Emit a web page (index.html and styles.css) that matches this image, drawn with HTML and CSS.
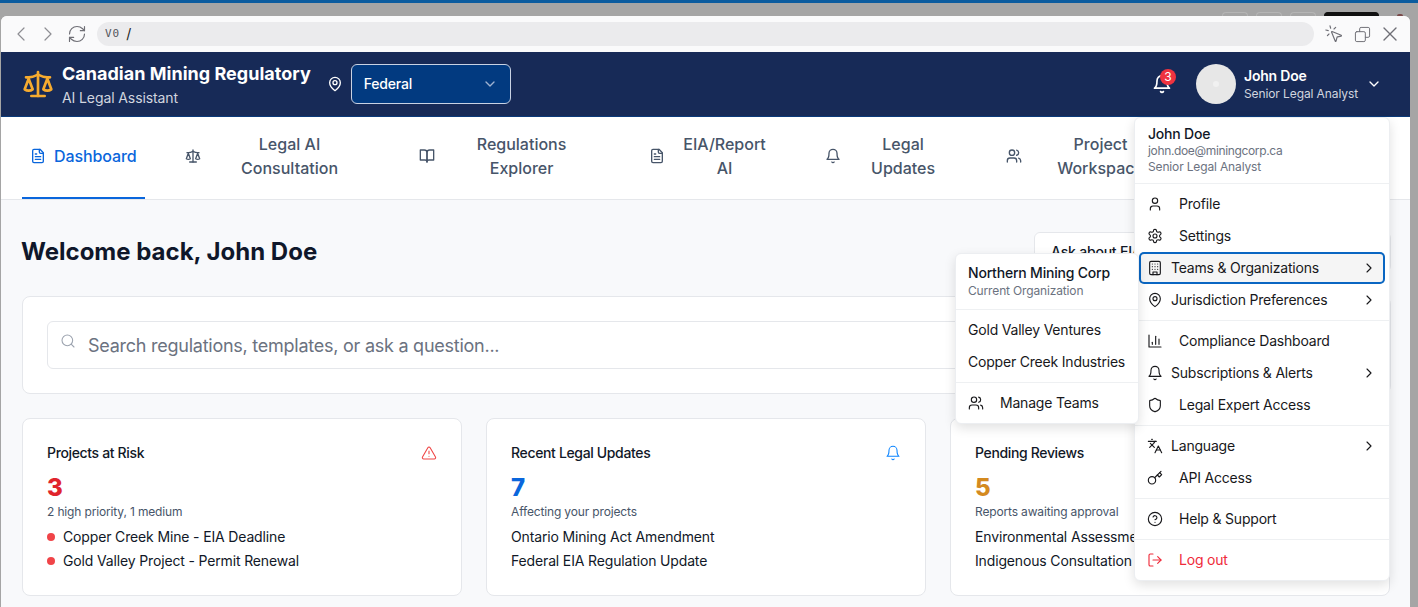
FILE: index.html
```html
<!DOCTYPE html>
<html lang="en">
<head>
    <meta charset="UTF-8">
    <meta name="viewport" content="width=device-width, initial-scale=1.0">
    <title>Canadian Mining Regulatory</title>
    <link rel="stylesheet" href="styles.css">
</head>
<body>
    <svg class="sprite" xmlns="http://www.w3.org/2000/svg">
        <symbol id="i-scale" viewBox="0 0 24 24"><path d="m16 16 3-8 3 8c-.87.65-1.92 1-3 1s-2.13-.35-3-1Z"/><path d="m2 16 3-8 3 8c-.87.65-1.92 1-3 1s-2.13-.35-3-1Z"/><path d="M7 21h10"/><path d="M12 3v18"/><path d="M3 7h2c2 0 5-1 7-2 2 1 5 2 7 2h2"/></symbol>
        <symbol id="i-pin" viewBox="0 0 24 24"><path d="M20 10c0 6-8 12-8 12s-8-6-8-12a8 8 0 0 1 16 0Z"/><circle cx="12" cy="10" r="3"/></symbol>
        <symbol id="i-down" viewBox="0 0 24 24"><path d="m6 9 6 6 6-6"/></symbol>
        <symbol id="i-right" viewBox="0 0 24 24"><path d="m9 18 6-6-6-6"/></symbol>
        <symbol id="i-left" viewBox="0 0 24 24"><path d="m15 18-6-6 6-6"/></symbol>
        <symbol id="i-bell" viewBox="0 0 24 24"><path d="M6 8a6 6 0 0 1 12 0c0 7 3 9 3 9H3s3-2 3-9"/><path d="M10.3 21a1.94 1.94 0 0 0 3.4 0"/></symbol>
        <symbol id="i-file" viewBox="0 0 24 24"><path d="M15 2H6a2 2 0 0 0-2 2v16a2 2 0 0 0 2 2h12a2 2 0 0 0 2-2V7Z"/><path d="M14 2v4a2 2 0 0 0 2 2h4"/><path d="M10 9H8"/><path d="M16 13H8"/><path d="M16 17H8"/></symbol>
        <symbol id="i-book" viewBox="0 0 24 24"><path d="M2 3h6a4 4 0 0 1 4 4v14a3 3 0 0 0-3-3H2z"/><path d="M22 3h-6a4 4 0 0 0-4 4v14a3 3 0 0 1 3-3h7z"/></symbol>
        <symbol id="i-users" viewBox="0 0 24 24"><path d="M16 21v-2a4 4 0 0 0-4-4H6a4 4 0 0 0-4 4v2"/><circle cx="9" cy="7" r="4"/><path d="M22 21v-2a4 4 0 0 0-3-3.87"/><path d="M16 3.13a4 4 0 0 1 0 7.75"/></symbol>
        <symbol id="i-user" viewBox="0 0 24 24"><path d="M19 21v-2a4 4 0 0 0-4-4H9a4 4 0 0 0-4 4v2"/><circle cx="12" cy="7" r="4"/></symbol>
        <symbol id="i-gear" viewBox="0 0 24 24"><path d="M12.22 2h-.44a2 2 0 0 0-2 2v.18a2 2 0 0 1-1 1.73l-.43.25a2 2 0 0 1-2 0l-.15-.08a2 2 0 0 0-2.73.73l-.22.38a2 2 0 0 0 .73 2.73l.15.1a2 2 0 0 1 1 1.72v.51a2 2 0 0 1-1 1.74l-.15.09a2 2 0 0 0-.73 2.73l.22.38a2 2 0 0 0 2.73.73l.15-.08a2 2 0 0 1 2 0l.43.25a2 2 0 0 1 1 1.73V20a2 2 0 0 0 2 2h.44a2 2 0 0 0 2-2v-.18a2 2 0 0 1 1-1.73l.43-.25a2 2 0 0 1 2 0l.15.08a2 2 0 0 0 2.73-.73l.22-.39a2 2 0 0 0-.73-2.73l-.15-.08a2 2 0 0 1-1-1.74v-.5a2 2 0 0 1 1-1.74l.15-.09a2 2 0 0 0 .73-2.73l-.22-.38a2 2 0 0 0-2.73-.73l-.15.08a2 2 0 0 1-2 0l-.43-.25a2 2 0 0 1-1-1.73V4a2 2 0 0 0-2-2z"/><circle cx="12" cy="12" r="3"/></symbol>
        <symbol id="i-building" viewBox="0 0 24 24"><rect x="4" y="2" width="16" height="20" rx="2"/><path d="M9 22v-4h6v4"/><path d="M8 6h.01"/><path d="M16 6h.01"/><path d="M12 6h.01"/><path d="M12 10h.01"/><path d="M12 14h.01"/><path d="M16 10h.01"/><path d="M16 14h.01"/><path d="M8 10h.01"/><path d="M8 14h.01"/></symbol>
        <symbol id="i-chart" viewBox="0 0 24 24"><path d="M3 3v18h18"/><path d="M18 17V9"/><path d="M13 17V5"/><path d="M8 17v-3"/></symbol>
        <symbol id="i-shield" viewBox="0 0 24 24"><path d="M20 13c0 5-3.5 7.5-7.66 8.95a1 1 0 0 1-.67-.01C7.5 20.5 4 18 4 13V6a1 1 0 0 1 1-1c2 0 4.5-1.2 6.24-2.72a1.17 1.17 0 0 1 1.52 0C14.51 3.81 17 5 19 5a1 1 0 0 1 1 1z"/></symbol>
        <symbol id="i-lang" viewBox="0 0 24 24"><path d="m5 8 6 6"/><path d="m4 14 6-6 2-3"/><path d="M2 5h12"/><path d="M7 2h1"/><path d="m22 22-5-10-5 10"/><path d="M14 18h6"/></symbol>
        <symbol id="i-key" viewBox="0 0 24 24"><circle cx="7.5" cy="15.5" r="5.5"/><path d="m21 2-9.6 9.6"/><path d="m15.5 7.5 3 3L22 7l-3-3"/></symbol>
        <symbol id="i-help" viewBox="0 0 24 24"><circle cx="12" cy="12" r="10"/><path d="M9.09 9a3 3 0 0 1 5.83 1c0 2-3 3-3 3"/><path d="M12 17h.01"/></symbol>
        <symbol id="i-logout" viewBox="0 0 24 24"><path d="M9 21H5a2 2 0 0 1-2-2V5a2 2 0 0 1 2-2h4"/><path d="m16 17 5-5-5-5"/><path d="M21 12H9"/></symbol>
        <symbol id="i-alert" viewBox="0 0 24 24"><path d="m21.73 18-8-14a2 2 0 0 0-3.48 0l-8 14A2 2 0 0 0 4 21h16a2 2 0 0 0 1.73-3"/><path d="M12 9v4"/><path d="M12 17h.01"/></symbol>
        <symbol id="i-search" viewBox="0 0 24 24"><circle cx="11" cy="11" r="8"/><path d="m21 21-4.3-4.3"/></symbol>
        <symbol id="i-reload" viewBox="0 0 24 24"><path d="M3 12a9 9 0 0 1 9-9 9.75 9.75 0 0 1 6.74 2.74L21 8"/><path d="M21 3v5h-5"/><path d="M21 12a9 9 0 0 1-9 9 9.75 9.75 0 0 1-6.74-2.74L3 16"/><path d="M8 16H3v5"/></symbol>
        <symbol id="i-click" viewBox="0 0 24 24"><path d="M14 4.1 12 6"/><path d="m5.1 8-2.9-.8"/><path d="m6 12-1.9 2"/><path d="M7.2 2.2 8 5.1"/><path d="M9.037 9.69a.498.498 0 0 1 .653-.653l11 4.5a.5.5 0 0 1-.074.949l-4.349 1.041a1 1 0 0 0-.74.739l-1.04 4.35a.5.5 0 0 1-.95.074z"/></symbol>
        <symbol id="i-windows" viewBox="0 0 24 24"><rect x="2" y="8" width="14" height="14" rx="2"/><path d="M8 8V4a2 2 0 0 1 2-2h10a2 2 0 0 1 2 2v10a2 2 0 0 1-2 2h-4"/></symbol>
        <symbol id="i-x" viewBox="0 0 24 24"><path d="M18 6 6 18"/><path d="m6 6 12 12"/></symbol>
    </svg>

    <div class="os-strip"></div>
    <div class="os-tabs">
        <span class="os-tab"></span>
        <span class="os-tab"></span>
        <span class="os-tab"></span>
        <span class="os-tab os-tab-dark"></span>
        <span class="os-dot"></span>
    </div>

    <div class="window">
        <div class="toolbar">
            <svg class="icon tool-chevron"><use href="#i-left"/></svg>
            <svg class="icon tool-chevron tool-forward"><use href="#i-right"/></svg>
            <svg class="icon tool-reload"><use href="#i-reload"/></svg>
            <div class="url-pill"><span class="url-logo">V0</span> <span class="url-path">/</span></div>
            <svg class="icon tool-click"><use href="#i-click"/></svg>
            <svg class="icon tool-windows"><use href="#i-windows"/></svg>
            <svg class="icon tool-close"><use href="#i-x"/></svg>
        </div>

        <header class="app-header">
            <svg class="icon brand-icon"><use href="#i-scale"/></svg>
            <div class="brand-text">
                <div class="brand-title">Canadian Mining Regulatory</div>
                <div class="brand-sub">AI Legal Assistant</div>
            </div>
            <svg class="icon pin-icon"><use href="#i-pin"/></svg>
            <div class="jurisdiction">
                <span>Federal</span>
                <svg class="icon"><use href="#i-down"/></svg>
            </div>
            <div class="notify">
                <svg class="icon icon-20"><use href="#i-bell"/></svg>
                <span class="notify-badge">3</span>
            </div>
            <div class="avatar"><span class="avatar-dot"></span></div>
            <div class="user-text">
                <div class="user-name">John Doe</div>
                <div class="user-role">Senior Legal Analyst</div>
            </div>
            <svg class="icon user-chevron"><use href="#i-down"/></svg>
        </header>

        <nav class="tabs">
            <a class="tab tab-active"><svg class="icon"><use href="#i-file"/></svg><span>Dashboard</span></a>
            <a class="tab"><svg class="icon"><use href="#i-scale"/></svg><span class="tab-label w-162">Legal AI<br>Consultation</span></a>
            <a class="tab"><svg class="icon"><use href="#i-book"/></svg><span class="tab-label w-158">Regulations<br>Explorer</span></a>
            <a class="tab"><svg class="icon"><use href="#i-file"/></svg><span class="tab-label w-104">EIA/Report<br>AI</span></a>
            <a class="tab"><svg class="icon"><use href="#i-bell"/></svg><span class="tab-label w-109">Legal<br>Updates</span></a>
            <a class="tab"><svg class="icon"><use href="#i-users"/></svg><span class="tab-label w-142">Project<br>Workspace</span></a>
        </nav>

        <main class="content">
            <div class="welcome-row">
                <h1>Welcome back, John Doe</h1>
                <div class="ask-btn">Ask about EIA Reports and permits today</div>
            </div>

            <section class="search-card">
                <div class="search-box">
                    <svg class="icon search-icon"><use href="#i-search"/></svg>
                    <span class="search-text">Search regulations, templates, or ask a question...</span>
                </div>
            </section>

            <section class="cards">
                <div class="card">
                    <div class="card-head">
                        <span>Projects at Risk</span>
                        <svg class="icon c-red"><use href="#i-alert"/></svg>
                    </div>
                    <div class="card-num num-red">3</div>
                    <div class="card-sub">2 high priority, 1 medium</div>
                    <ul class="card-list">
                        <li class="has-dot">Copper Creek Mine - EIA Deadline</li>
                        <li class="has-dot">Gold Valley Project - Permit Renewal</li>
                    </ul>
                </div>
                <div class="card">
                    <div class="card-head">
                        <span>Recent Legal Updates</span>
                        <svg class="icon c-blue"><use href="#i-bell"/></svg>
                    </div>
                    <div class="card-num num-blue">7</div>
                    <div class="card-sub">Affecting your projects</div>
                    <ul class="card-list">
                        <li>Ontario Mining Act Amendment</li>
                        <li>Federal EIA Regulation Update</li>
                    </ul>
                </div>
                <div class="card">
                    <div class="card-head">
                        <span>Pending Reviews</span>
                    </div>
                    <div class="card-num num-amber">5</div>
                    <div class="card-sub">Reports awaiting approval</div>
                    <ul class="card-list">
                        <li>Environmental Assessment Report</li>
                        <li>Indigenous Consultation Plan</li>
                    </ul>
                </div>
            </section>
        </main>
    </div>

    <div class="menu user-menu">
        <div class="menu-head">
            <div class="menu-name">John Doe</div>
            <div class="menu-meta menu-email">john.doe@miningcorp.ca</div>
            <div class="menu-meta menu-role">Senior Legal Analyst</div>
        </div>
        <div class="menu-sep"></div>
        <div class="menu-item"><svg class="icon"><use href="#i-user"/></svg>Profile</div>
        <div class="menu-item"><svg class="icon"><use href="#i-gear"/></svg>Settings</div>
        <div class="menu-item sub-item sub-open"><svg class="icon"><use href="#i-building"/></svg>Teams &amp; Organizations<svg class="icon sub-arrow"><use href="#i-right"/></svg></div>
        <div class="menu-item sub-item"><svg class="icon"><use href="#i-pin"/></svg>Jurisdiction Preferences<svg class="icon sub-arrow"><use href="#i-right"/></svg></div>
        <div class="menu-sep"></div>
        <div class="menu-item"><svg class="icon"><use href="#i-chart"/></svg>Compliance Dashboard</div>
        <div class="menu-item sub-item"><svg class="icon"><use href="#i-bell"/></svg>Subscriptions &amp; Alerts<svg class="icon sub-arrow"><use href="#i-right"/></svg></div>
        <div class="menu-item"><svg class="icon"><use href="#i-shield"/></svg>Legal Expert Access</div>
        <div class="menu-sep"></div>
        <div class="menu-item sub-item"><svg class="icon"><use href="#i-lang"/></svg>Language<svg class="icon sub-arrow"><use href="#i-right"/></svg></div>
        <div class="menu-item"><svg class="icon"><use href="#i-key"/></svg>API Access</div>
        <div class="menu-sep"></div>
        <div class="menu-item"><svg class="icon"><use href="#i-help"/></svg>Help &amp; Support</div>
        <div class="menu-sep"></div>
        <div class="menu-item menu-danger"><svg class="icon"><use href="#i-logout"/></svg>Log out</div>
    </div>

    <div class="menu org-menu">
        <div class="menu-head org-head">
            <div class="menu-name">Northern Mining Corp</div>
            <div class="menu-meta">Current Organization</div>
        </div>
        <div class="menu-sep"></div>
        <div class="menu-item">Gold Valley Ventures</div>
        <div class="menu-item">Copper Creek Industries</div>
        <div class="menu-sep"></div>
        <div class="menu-item"><svg class="icon"><use href="#i-users"/></svg>Manage Teams</div>
    </div>
</body>
</html>
```

FILE: styles.css
```css
html, body {
    margin: 0;
    height: 607px;
    overflow: hidden;
}
body {
    font-family: Inter, "Liberation Sans", sans-serif;
    font-size: 14px;
    line-height: 20px;
    letter-spacing: -0.2px;
    color: #111827;
    background: #a5a5a5;
}
.sprite {
    display: none;
}
.icon {
    width: 16px;
    height: 16px;
    flex: none;
    fill: none;
    stroke: currentColor;
    stroke-width: 2;
    stroke-linecap: round;
    stroke-linejoin: round;
}
.icon-20 {
    width: 20px;
    height: 20px;
}

/* desktop behind the window */
.os-strip {
    height: 3px;
    background: #0b5c9f;
}
.os-tabs {
    display: flex;
    justify-content: flex-end;
    align-items: flex-end;
    gap: 8px;
    height: 13px;
    padding-right: 15px;
}
.os-tab {
    width: 26px;
    height: 4px;
    box-sizing: border-box;
    border: 1px solid #b5b5b5;
    border-bottom: 0;
    border-radius: 5px 5px 0 0;
}
.os-tab-dark {
    width: 55px;
    background: #111;
    border-color: #111;
}
.os-dot {
    width: 6px;
    height: 2px;
    margin-left: 10px;
    border-radius: 3px 3px 0 0;
    background: #7a4a4a;
}

.window {
    width: 1409px;
    height: 591px;
    margin-left: 1px;
    border-radius: 6px 6px 0 0;
    overflow: hidden;
    background: #f8f9fb;
}

/* browser toolbar */
.toolbar {
    display: flex;
    align-items: center;
    gap: 8px;
    height: 36px;
    padding: 0 10px;
    background: #fafafb;
    color: #6f6f76;
}
.toolbar .icon {
    stroke-width: 1.4;
}
.toolbar .tool-chevron {
    width: 24px;
    height: 24px;
    margin: 0 -2px;
    color: #8d8d93;
    stroke-width: 1.2;
}
.toolbar .tool-forward {
    margin-left: -3px;
}
.tool-reload {
    width: 20px;
    height: 20px;
    margin-left: 1px;
}
.tool-click {
    width: 20px;
    height: 20px;
}
.tool-windows {
    width: 17px;
    height: 17px;
    margin: 0 1.5px;
}
.tool-close {
    width: 24px;
    height: 24px;
    margin: 0 -2px;
}
.url-pill {
    flex: 1;
    height: 24px;
    margin: 0 2px;
    padding-left: 8px;
    border-radius: 12px;
    background: #ebebed;
    display: flex;
    align-items: center;
    gap: 6px;
}
.url-logo {
    font-family: "DejaVu Sans Mono", monospace;
    font-size: 11px;
    letter-spacing: 1px;
    color: #55555c;
}
.url-path {
    font-size: 14px;
    color: #222;
}

/* app header */
.app-header {
    display: flex;
    align-items: center;
    height: 64px;
    padding: 0 28px 0 21px;
    background: #172a57;
    border-bottom: 1px solid #0a3a7a;
    color: #fff;
}
.brand-icon {
    width: 32px;
    height: 32px;
    color: #f6ab2f;
    margin-right: 8px;
}
.brand-text {
    margin-top: 1px;
}
.brand-title {
    font-size: 18px;
    font-weight: 700;
    line-height: 24px;
    letter-spacing: 0.02px;
}
.brand-sub {
    font-size: 14px;
    line-height: 20px;
    margin-top: 2px;
    letter-spacing: -0.1px;
    color: #d1d5df;
}
.pin-icon {
    margin: 0 8px 0 16px;
}
.jurisdiction {
    width: 160px;
    height: 40px;
    box-sizing: border-box;
    display: flex;
    align-items: center;
    justify-content: space-between;
    padding: 0 12px;
    border: 1px solid #c9d2e3;
    border-radius: 6px;
    background: #023a80;
    font-weight: 500;
}
.jurisdiction .icon {
    color: #9fb3d1;
}
.notify {
    position: relative;
    display: flex;
    margin-left: auto;
    margin-right: 24px;
}
.notify-badge {
    position: absolute;
    top: -5px;
    right: -4px;
    width: 16px;
    height: 16px;
    border-radius: 50%;
    background: #ef3340;
    font-size: 12px;
    line-height: 16px;
    text-align: center;
}
.avatar {
    width: 40px;
    height: 40px;
    border-radius: 50%;
    background: #e7e7e7;
    display: flex;
    align-items: center;
    justify-content: center;
    margin-right: 8px;
}
.avatar-dot {
    width: 6px;
    height: 6px;
    border-radius: 50%;
    background: #f1f1f1;
}
.user-text {
    margin-top: 1px;
}
.user-name {
    font-weight: 600;
    line-height: 18px;
}
.user-role {
    font-size: 12px;
    line-height: 18px;
    letter-spacing: -0.1px;
    color: #d1d5df;
}
.user-chevron {
    margin-left: 8px;
}

/* main tabs */
.tabs {
    display: flex;
    gap: 32px;
    height: 82px;
    padding: 0 21px;
    background: #fff;
    border-bottom: 1px solid #e5e7eb;
    overflow: hidden;
    font-size: 16px;
    line-height: 24px;
    font-weight: 500;
    letter-spacing: 0;
    color: #475569;
}
.tab {
    display: flex;
    align-items: center;
    gap: 8px;
    padding: 0 8px 4px;
    flex: none;
}
.tab-label {
    text-align: center;
}
.tab-active {
    color: #0a66dc;
    letter-spacing: -0.1px;
    box-shadow: inset 0 -2px 0 #0a66dc;
}
.w-162 { width: 162px; }
.w-158 { width: 158px; }
.w-104 { width: 104px; }
.w-109 { width: 109px; }
.w-142 { width: 142px; }

/* dashboard */
.content {
    padding: 32px 19px 0 21px;
}
.welcome-row {
    display: flex;
    align-items: center;
    justify-content: space-between;
    height: 40px;
    margin-bottom: 24px;
}
h1 {
    margin: 0 0 0 -1px;
    font-size: 24px;
    line-height: 32px;
    font-weight: 700;
    letter-spacing: 0;
    color: #0f172a;
}
.ask-btn {
    width: 357px;
    height: 40px;
    box-sizing: border-box;
    padding: 0 16px;
    border: 1px solid #e5e7eb;
    border-radius: 6px;
    background: #fff;
    font-weight: 500;
    line-height: 38px;
    white-space: nowrap;
    overflow: hidden;
}
.search-card {
    padding: 24px;
    background: #fff;
    border: 1px solid #e5e7eb;
    border-radius: 8px;
    margin-bottom: 24px;
}
.search-box {
    display: flex;
    align-items: center;
    height: 48px;
    box-sizing: border-box;
    padding-left: 12px;
    border: 1px solid #e5e7eb;
    border-radius: 6px;
    background: #fff;
}
.search-icon {
    color: #9ca3af;
    stroke-width: 1.6;
    margin: -8px 12px 0 0;
}
.search-text {
    font-size: 18px;
    letter-spacing: -0.25px;
    margin-top: 2px;
    color: #6b7280;
}
.cards {
    display: grid;
    grid-template-columns: repeat(3, 440px);
    gap: 24px;
}
.card {
    padding: 24px;
    background: #fff;
    border: 1px solid #e5e7eb;
    border-radius: 8px;
}
.card-head {
    display: flex;
    justify-content: space-between;
    align-items: center;
    font-weight: 500;
    letter-spacing: -0.35px;
    height: 20px;
}
.c-red { color: #ef4444; stroke-width: 1.6; }
.c-blue { color: #0a84ff; stroke-width: 1.6; }
.card-num {
    margin-top: 9px;
    font-size: 24px;
    line-height: 32px;
    font-weight: 800;
}
.num-red { color: #e0242c; }
.num-blue { color: #0a66dc; }
.num-amber { color: #d48a1f; }
.card-sub {
    font-size: 12px;
    line-height: 16px;
    letter-spacing: -0.15px;
    color: #475569;
}
.card-list {
    list-style: none;
    margin: 7px 0 0;
    padding: 0;
    display: flex;
    flex-direction: column;
    gap: 4px;
    letter-spacing: -0.15px;
    white-space: nowrap;
}
.has-dot {
    display: flex;
    align-items: center;
    gap: 8px;
}
.has-dot::before {
    content: "";
    width: 8px;
    height: 8px;
    border-radius: 50%;
    background: #f04448;
}

/* open dropdowns, they sit over the page */
.menu {
    position: absolute;
    box-sizing: border-box;
    padding: 4px;
    background: #fff;
    border: 1px solid #eceef1;
    border-radius: 6px;
    box-shadow: 0 4px 12px rgba(0, 0, 0, 0.12);
}
.user-menu {
    top: 117px;
    left: 1134px;
    width: 256px;
    height: 464px;
}
.org-menu {
    top: 253px;
    left: 955px;
    width: 184px;
    height: 171px;
}
.menu-head {
    box-sizing: border-box;
    height: 57px;
    padding: 4px 8px 0 9px;
}
.org-head {
    height: 47px;
    padding: 5px 8px 0;
}
.menu-name {
    font-weight: 500;
    line-height: 16px;
}
.org-head .menu-name {
    line-height: 19px;
}
.menu-meta {
    font-size: 12px;
    line-height: 17px;
    letter-spacing: -0.15px;
    color: #6b7280;
}
.menu-email {
    letter-spacing: -0.35px;
}
.menu-role {
    margin-top: -1px;
}
.menu-sep {
    height: 1px;
    margin: 4px -4px;
    background: #eef0f2;
}
.menu-item {
    display: flex;
    align-items: center;
    gap: 16px;
    height: 32px;
    padding: 0 8px;
    white-space: nowrap;
    color: #18181b;
}
.menu-item .icon {
    stroke-width: 1.7;
}
.sub-item {
    gap: 8px;
}
.sub-item .sub-arrow {
    margin-left: auto;
}
.sub-open {
    background: #f5f5f5;
    border-radius: 5px;
    box-shadow: inset 0 0 0 2px #0a66c2;
}
.menu-danger {
    color: #ef2b3a;
}
```
